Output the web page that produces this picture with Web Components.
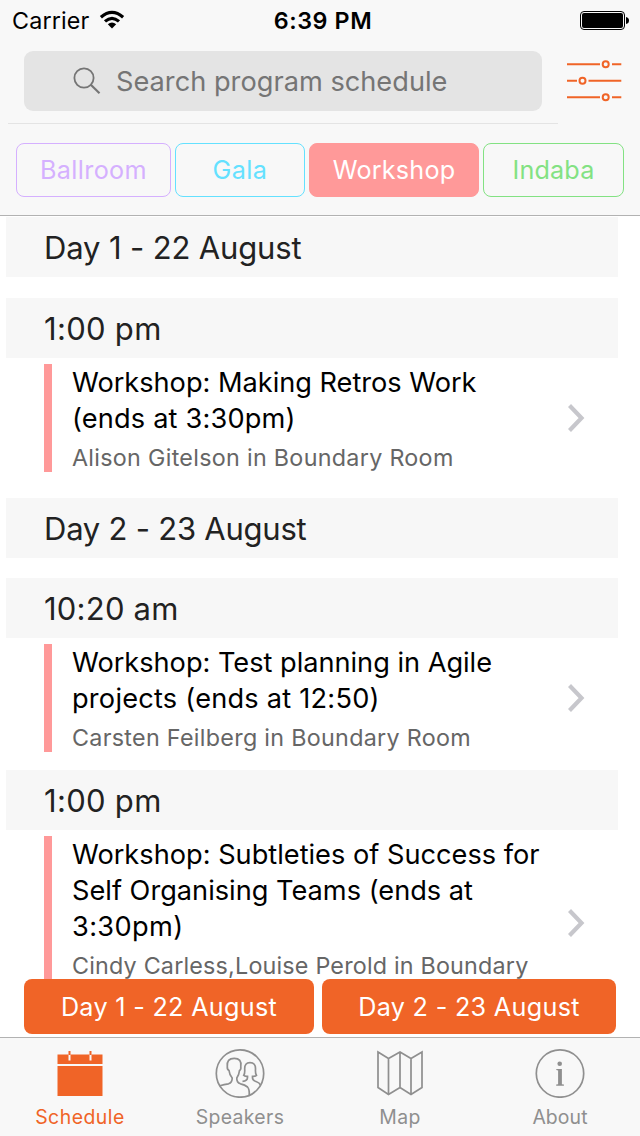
<!DOCTYPE html>
<html lang="en">
<head>
<meta charset="utf-8">
<title>Program schedule</title>
<style>
html,body{margin:0;height:100%;background:#fff}
body{font-family:Inter,"Liberation Sans",sans-serif;overflow:hidden}
</style>
</head>
<body>
<schedule-app></schedule-app>
<script>
const define = (name, html) => {
  const t = document.createElement('template');
  t.innerHTML = html;
  customElements.define(name, class extends HTMLElement {
    constructor() {
      super();
      this.attachShadow({mode: 'open'}).append(t.content.cloneNode(true));
    }
  });
};

define('status-bar', `
<style>
:host{display:grid;grid-template-columns:1fr auto 1fr;align-items:center;height:40px;padding:0 11px 0 12px;font-size:23.3px;color:#000;line-height:40px}
.left{display:flex;align-items:center;gap:10px;letter-spacing:.15px}
.left span,.time{padding-top:2px;line-height:38px}
.time{font-weight:600;letter-spacing:.6px;padding-left:5px}
svg{display:block}
.batt{justify-self:end}
</style>
<div class="left"><span>Carrier</span><svg width="26" height="20" viewBox="0 0 26 20"><g fill="none" stroke="#000" stroke-width="3.2"><path d="M1.900 7.200Q13 -2.400 24.100 7.200"/><path d="M6 11.400Q13 5.200 20 11.400"/></g><path d="M8.800 14.300Q13 10.900 17.200 14.300L13 18.600Z"/></svg></div>
<span class="time">6:39 PM</span>
<svg class="batt" width="50" height="20" viewBox="0 0 50 20"><rect x="1.500" y="1.500" width="44" height="18" rx="3.500" fill="none" stroke="#000"/><rect x="3" y="3" width="41" height="15" rx="2"/><path d="M47 7q3 .5 3 3.500t-3 3.500z"/></svg>`);

define('search-row', `
<style>
:host{display:flex;align-items:flex-start;justify-content:space-between;height:72px;padding:11px 18px 0 24px}
.box{display:flex;align-items:center;box-sizing:border-box;width:518px;height:60px;border-radius:9px;background:#e4e4e4;color:#757575;font-size:27.2px;letter-spacing:.01px;padding-left:49px;gap:15px}
svg{display:block}
.filter{margin-top:8px}
</style>
<div class="box"><svg width="28" height="28" viewBox="0 0 28 28" fill="none" stroke="#757575" stroke-width="1.800"><circle cx="11" cy="11" r="9.600"/><path d="M17.800 17.800L26.500 26.200" stroke-width="2.200"/></svg><span>Search program schedule</span></div>
<svg class="filter" width="56" height="44" viewBox="0 0 56 44" fill="none" stroke="#f06427" stroke-width="2"><path d="M1 5.200H34M46 5.200H55.300M1 21.700H11M22.500 21.700H55.300M1 38.200H34M46 38.200H55.300"/><circle cx="39.700" cy="5.200" r="3"/><circle cx="16.500" cy="21.700" r="3"/><circle cx="39.700" cy="38.200" r="3"/></svg>`);

define('filter-chip', `
<style>
:host{display:flex;align-items:center;justify-content:center;box-sizing:border-box;height:54px;border:1px solid currentColor;border-radius:8px;font-size:25.2px}
:host([selected]){background:#ff9999;border-color:#ff9999;color:#fff}
</style><slot></slot>`);

define('day-header', `
<style>
:host{display:block;box-sizing:border-box;margin:0 22px 0 6px;padding:2px 0 0 38px;height:60px;line-height:58px;font-size:31px;background:#f7f7f7;color:#222;white-space:nowrap}
</style><slot></slot>`);

define('session-item', `
<style>
:host{display:flex;position:relative;box-sizing:border-box;margin:6px 55px 0 44px;min-height:108px;border-left:8px solid #ff9999;padding-left:20px;align-items:center;justify-content:space-between}
.text{align-self:flex-start;margin-top:1px;margin-bottom:-2px;white-space:nowrap}
.title{font-size:27.2px;line-height:36px;color:#000}
.sub{font-size:23.3px;line-height:28px;margin-top:7px;color:#666}
::slotted(span){display:block}
svg{display:block;flex:none;margin-left:-20px}
</style>
<div class="text"><div class="title"><slot></slot></div><div class="sub"><slot name="sub"></slot></div></div>
<svg width="17" height="28" viewBox="0 0 17 28" fill="none" stroke="#c7c7cc" stroke-width="4.200"><path d="M1.500 1.500L13.500 14L1.500 26.500"/></svg>`);

define('day-button', `
<style>
:host{display:flex;align-items:center;justify-content:center;height:55px;border-radius:8px;background:#f06427;color:#fff;font-size:25.2px;letter-spacing:.3px}
</style><slot></slot>`);

define('tab-item', `
<style>
:host{display:flex;flex-direction:column;align-items:center;flex:1;color:#8f8f8f;font-size:19.4px;line-height:24px;padding-top:10px}
:host([active]){color:#f06427}
.icon{height:50px;margin:0 1px 7px 0}
</style>
<div class="icon"><slot name="icon"></slot></div><slot></slot>`);

define('schedule-app', `
<style>
:host{display:flex;flex-direction:column;height:1136px;width:640px;position:relative;overflow:hidden;background:#fff}
header{background:#f8f8f8;height:215px;border-bottom:1px solid #b2b2b2;flex:none}
.rule{height:1px;width:550px;margin:11px 0 0 8px;background:#e4e4e4}
.chips{display:grid;grid-template-columns:155px 130px 170px 141px;gap:4px;padding:19px 16px 0}
main{flex:1;min-height:0;overflow:hidden;padding-top:1px}
.gap{margin-top:21px}.gap2{margin-top:20px}.gap3{margin-top:26px}.gap4{margin-top:18px}
.days{position:absolute;left:24px;top:979px;display:grid;grid-template-columns:290px 294px;gap:8px}
.tabs{display:flex;height:98px;flex:none;border-top:1px solid #b2b2b2;background:#f8f8f8}
svg{display:block}
search-row{height:61px}
</style>
<header>
<status-bar></status-bar><search-row></search-row><div class="rule"></div>
<div class="chips">
<filter-chip style="color:#d5b0ff;letter-spacing:.35px">Ballroom</filter-chip>
<filter-chip style="color:#64e1ff;letter-spacing:.4px">Gala</filter-chip>
<filter-chip selected style="letter-spacing:.2px">Workshop</filter-chip>
<filter-chip style="color:#83e283;letter-spacing:.15px">Indaba</filter-chip>
</div>
</header>
<main>
<day-header style="letter-spacing:-.14px">Day 1 - 22 August</day-header>
<day-header class="gap" style="letter-spacing:.3px">1:00 pm</day-header>
<session-item><span style="letter-spacing:-.02px">Workshop: Making Retros Work</span><span style="letter-spacing:.17px">(ends at 3:30pm)</span><span slot="sub" style="letter-spacing:.3px">Alison Gitelson in Boundary Room</span></session-item>
<day-header class="gap3" style="letter-spacing:-.23px">Day 2 - 23 August</day-header>
<day-header class="gap2" style="letter-spacing:.22px">10:20 am</day-header>
<session-item><span style="letter-spacing:-.02px">Workshop: Test planning in Agile</span><span style="letter-spacing:.22px">projects (ends at 12:50)</span><span slot="sub" style="letter-spacing:.3px">Carsten Feilberg in Boundary Room</span></session-item>
<day-header class="gap4" style="letter-spacing:.3px">1:00 pm</day-header>
<session-item style="height:174px"><span>Workshop: Subtleties of Success for</span><span>Self Organising Teams (ends at</span><span style="letter-spacing:.35px">3:30pm)</span><span slot="sub" style="letter-spacing:.2px">Cindy Carless,Louise Perold in Boundary</span></session-item>
</main>
<div class="days"><day-button>Day 1 - 22 August</day-button><day-button>Day 2 - 23 August</day-button></div>
<nav class="tabs">
<tab-item active style="letter-spacing:.5px"><svg slot="icon" width="50" height="50" viewBox="0 0 50 50"><path fill="#f06427" d="M2.500 6.500H47.500V16H2.500ZM2.500 18H47.500V48H2.500Z"/><path stroke="#f8f8f8" stroke-width="2" d="M14.500 6V12.500M35.500 6V12.500"/><path stroke="#f06427" stroke-width="2" d="M14.500 3V7M35.500 3V7"/></svg>Schedule</tab-item>
<tab-item style="letter-spacing:.34px"><svg slot="icon" width="50" height="50" viewBox="0 0 50 50" fill="none" stroke="#8f8f8f" stroke-width="1.700"><circle cx="25" cy="25.500" r="23.700"/><path d="M5 37.800Q9 36.200 13.500 35.800Q17.300 34.500 17.200 30Q14.500 27 14 22.500Q12 21.500 12.300 18.500Q11.500 10.300 19.200 10.300Q27 10.300 25.800 18.500Q26.200 21.500 24.500 22.500Q24 27 21.800 30Q21.500 34.500 25.500 35.800Q30 36.800 32.500 39Q34.500 41 34.300 47"/><path d="M27.500 33.300Q32.500 33 32.500 29.500V28.300Q29.500 28.500 28.700 27.300Q30 26 29.700 21Q29.500 14.700 35 14.700Q40.700 14.700 40.500 21Q40.200 26 41.500 27.300Q40.700 28.500 37.500 28.300V29.500Q37.300 32.500 41 33.500Q44.500 34.500 45.700 37.300"/></svg>Speakers</tab-item>
<tab-item style="letter-spacing:.35px"><svg slot="icon" width="50" height="50" viewBox="0 0 50 50" fill="none" stroke="#8f8f8f" stroke-width="1.700"><path d="M3 4L13.500 10.500L25 4L36 10.500L47 4V39.500L36 46.500L25 39.500L13.500 46.500L3 39.500ZM13.500 10.500V46.500M25 4V39.500M36 10.500V46.500"/></svg>Map</tab-item>
<tab-item style="letter-spacing:.1px"><svg slot="icon" width="50" height="50" viewBox="0 0 50 50"><circle cx="25" cy="25.500" r="23.700" fill="none" stroke="#8f8f8f" stroke-width="1.700"/><circle cx="24.700" cy="15.700" r="2.300" fill="#8f8f8f"/><path fill="#8f8f8f" d="M21.300 21H26.900V36.200L28.900 36.600V37.700H21.200V36.600L23.100 36.200V22.400L21.300 22Z"/></svg>About</tab-item>
</nav>`);
</script>
</body>
</html>
